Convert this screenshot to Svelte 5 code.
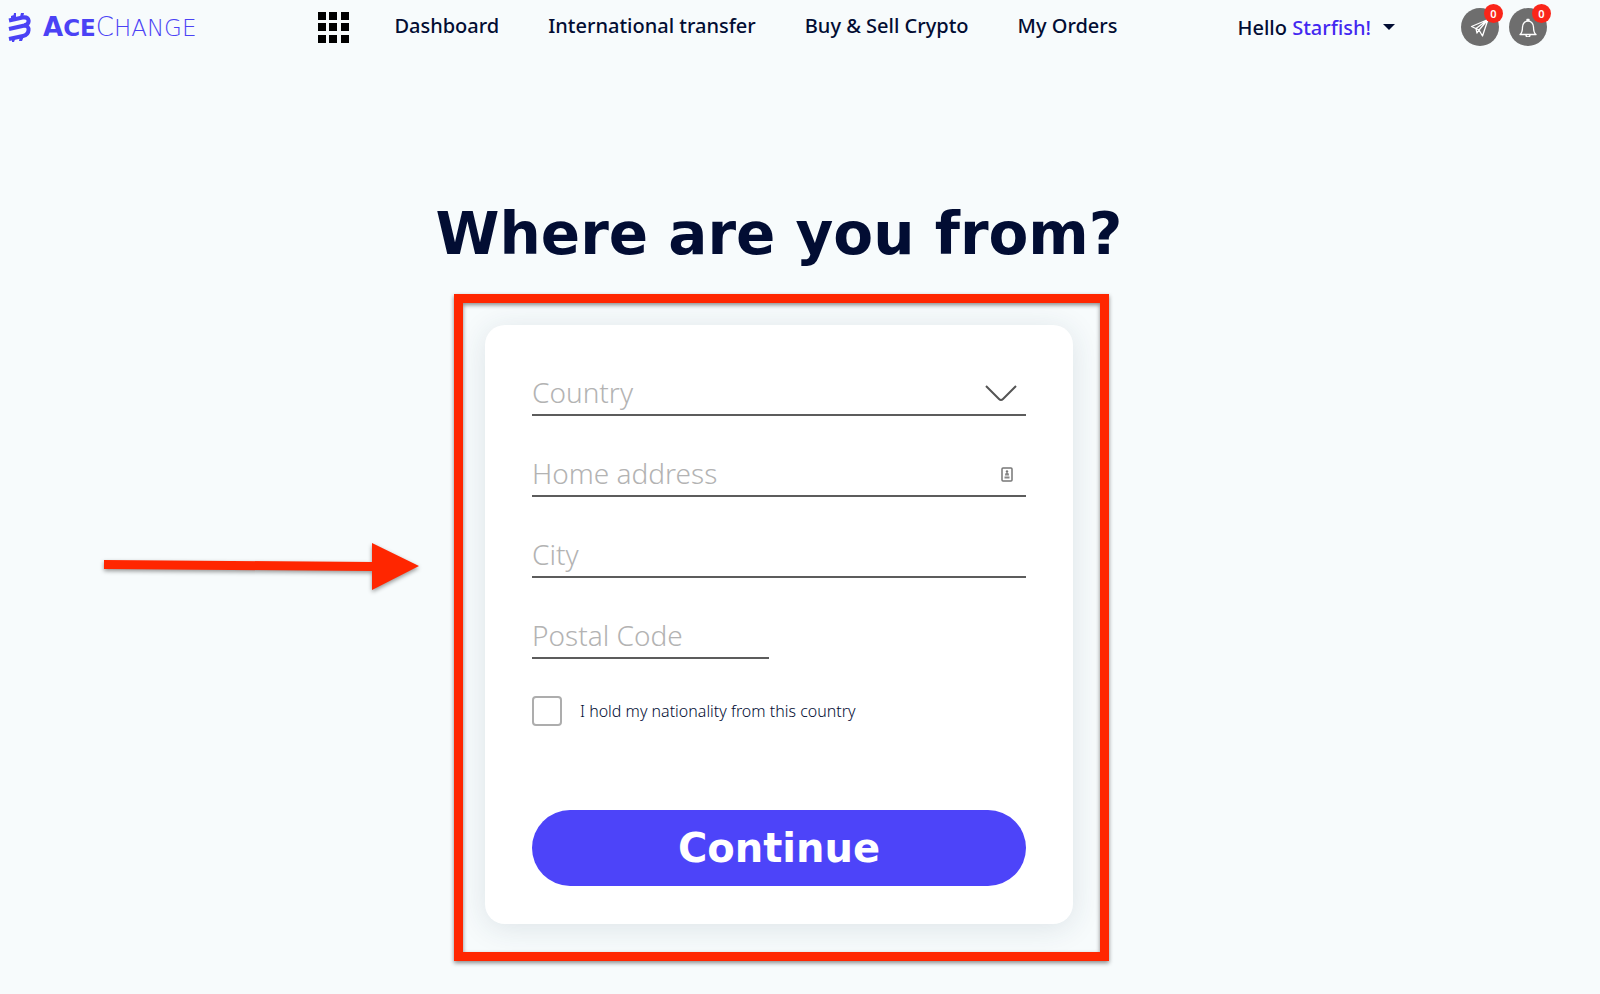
<script lang="ts">
  interface NavLink {
    label: string;
    href: string;
  }

  const links: NavLink[] = [
    { label: 'Dashboard', href: '#dashboard' },
    { label: 'International transfer', href: '#transfer' },
    { label: 'Buy & Sell Crypto', href: '#crypto' },
    { label: 'My Orders', href: '#orders' },
  ];

  // Top-left corners of the app launcher squares
  const dots = [0, 11, 23];

  let messages = $state(0);
  let alerts = $state(0);

  let country = $state('');
  let address = $state('');
  let city = $state('');
  let postalCode = $state('');
  let isNational = $state(false);

  function handleSubmit(event: SubmitEvent) {
    event.preventDefault();
  }
</script>

<header class="topbar">
  <a class="logo" href="#home">
    <svg width="23" height="32" viewBox="0 0 23 32" aria-hidden="true">
      <g fill="none" stroke="currentColor" stroke-width="4">
        <path d="M1 9.500L14.500 6.500C22 5.500 22.500 12.500 16.500 14.500L1 18" />
        <path d="M16 14.500C22.500 14 22 23.500 15 25L1 28" />
      </g>
      <path fill="currentColor" d="M3 8V5l3-1-1 4zM5 7l1-5h2v5zM12 6l1-4h3l-1 5zM4 26h4l-2 5H4zM12 25h4l-2 5h-3z" />
    </svg>
    <span class="logo-name"><b>A<small>CE</small></b><span class="thin">C<small>HANGE</small></span></span>
  </a>

  <button type="button" class="apps" aria-label="Apps">
    <svg width="31" height="31" viewBox="0 0 31 31">
      {#each dots as y}
        {#each dots as x}
          <rect {x} {y} width="8" height="8" />
        {/each}
      {/each}
    </svg>
  </button>

  <nav>
    {#each links as link (link.href)}
      <a href={link.href}>{link.label}</a>
    {/each}
  </nav>

  <div class="account">
    <button type="button" class="user">
      <span>Hello <span class="user-name">Starfish!</span></span>
      <svg width="12" height="6" viewBox="0 0 12 6" aria-hidden="true"><path d="M0 0h12L6 6z" fill="currentColor" /></svg>
    </button>

    <button type="button" class="round" aria-label="Messages">
      <svg width="20" height="20" viewBox="0 0 20 20" fill="none" stroke="currentColor" stroke-width="1.3" stroke-linejoin="round">
        <path d="M1.500 9.500L18 2.500L12.500 19L9 13zM18 2.500L6 11.500L7 16L9 13z" />
      </svg>
      <span class="badge">{messages}</span>
    </button>
    <button type="button" class="round" aria-label="Notifications">
      <svg width="20" height="20" viewBox="0 0 20 20" fill="none" stroke="currentColor" stroke-width="1.3" stroke-linejoin="round">
        <path d="M2 17.500C4 16 4.500 14 4.500 10C4.500 6.500 7 4 10 4s5.500 2.500 5.500 6c0 4 .5 6 2.500 7.500zM9 4V2.500h2V4M8 18a2 2 0 0 0 4 0" />
      </svg>
      <span class="badge">{alerts}</span>
    </button>
  </div>
</header>

<main>
  <h1>Where are you from?</h1>

  <form class="card" onsubmit={handleSubmit}>
    <div class="field">
      <select bind:value={country} aria-label="Country">
        <option value="">Country</option>
      </select>
      <svg class="chevron" width="32" height="17" viewBox="0 0 32 17" aria-hidden="true">
        <path d="M1 1l13 13Q16 16 18 14L31 1" fill="none" stroke="#555" stroke-width="2" />
      </svg>
    </div>

    <div class="field">
      <input type="text" placeholder="Home address" aria-label="Home address" bind:value={address} />
      <svg class="contact" width="12" height="15" viewBox="0 0 12 15" aria-hidden="true">
        <rect x="1" y="1" width="10" height="13" rx="1" fill="#fff" stroke="#777" stroke-width="1.500" />
        <circle cx="6" cy="4.500" r="1.200" fill="#777" />
        <path d="M4 8.500q0-3 2-3t2 3zM3.500 9.500h5v2h-5z" fill="#888" />
      </svg>
    </div>

    <div class="field">
      <input type="text" placeholder="City" aria-label="City" bind:value={city} />
    </div>

    <div class="field short">
      <input type="text" placeholder="Postal Code" aria-label="Postal Code" bind:value={postalCode} />
    </div>

    <label class="check">
      <input type="checkbox" bind:checked={isNational} />
      I hold my nationality from this country
    </label>

    <button type="submit" class="submit">Continue</button>

    <!-- Walkthrough highlight around the form -->
    <div class="highlight"></div>
    <svg class="arrow" width="320" height="54" viewBox="0 0 320 54" aria-hidden="true">
      <path d="M2 17L270 19V0L317 23L270 47V28L2 26z" fill="#ff2600" />
    </svg>
  </form>
</main>

<style>
  :global(body) {
    background: #f7fbfc;
    color: #020d33;
    font-family: 'Noto Sans', 'Open Sans', sans-serif;
  }

  button {
    padding: 0;
    border: none;
    background: none;
    color: inherit;
    font: inherit;
    cursor: pointer;
  }

  a {
    color: inherit;
    text-decoration: none;
  }

  .topbar {
    display: flex;
    align-items: center;
    height: 54px;
    padding: 0 53px 0 8px;
    font-size: 20px;
    font-weight: 500;
    white-space: nowrap;
  }

  .logo {
    display: flex;
    align-items: center;
    gap: 12px;
    color: #4b42f5;
  }

  .logo-name {
    font-family: 'DejaVu Sans', sans-serif;
    font-size: 26px;
    line-height: 32px;
  }

  .logo-name small {
    font-size: 23px;
  }

  .thin {
    font-weight: 200;
  }

  .apps {
    display: flex;
    margin-left: auto;
  }

  nav {
    display: flex;
    gap: 49px;
    margin-left: 45px;
    padding-bottom: 4px;
  }

  .account {
    display: flex;
    align-items: center;
    gap: 10px;
    margin-left: 120px;
  }

  .user {
    display: flex;
    align-items: center;
    gap: 12px;
    margin-right: 56px;
  }

  .user-name {
    color: #4328f0;
  }

  .round {
    position: relative;
    display: flex;
    align-items: center;
    justify-content: center;
    width: 38px;
    height: 38px;
    border-radius: 50%;
    background: #6e6e6e;
    color: #fff;
  }

  .badge {
    position: absolute;
    top: -4px;
    right: -4px;
    width: 19px;
    border-radius: 50%;
    background: #fa2519;
    font-size: 11px;
    font-weight: 600;
    line-height: 19px;
    text-align: center;
  }

  main {
    display: flex;
    flex-direction: column;
    align-items: center;
    padding: 142px 42px 70px 0;
  }

  h1 {
    margin: 0 0 53px;
    font-family: 'DejaVu Sans', sans-serif;
    font-size: 58px;
    font-weight: 700;
    line-height: 76px;
  }

  .card {
    position: relative;
    display: flex;
    flex-direction: column;
    gap: 37px;
    box-sizing: border-box;
    width: 100%;
    max-width: 588px;
    padding: 47px 47px 38px;
    border-radius: 20px;
    background: #fff;
    box-shadow: 0 4px 30px rgba(30, 60, 80, 0.12);
  }

  .field {
    position: relative;
    border-bottom: 2px solid #5c5c5c;
  }

  .field.short {
    width: 48%;
  }

  .field input,
  .field select {
    display: block;
    box-sizing: border-box;
    width: 100%;
    height: 42px;
    padding: 0 0 2px;
    border: none;
    outline: none;
    appearance: none;
    background: none;
    color: #b3b3b3;
    font: 300 28px 'Noto Sans', sans-serif;
  }

  .field input::placeholder {
    color: #b3b3b3;
  }

  .chevron {
    position: absolute;
    top: 13px;
    right: 9px;
    pointer-events: none;
  }

  .contact {
    position: absolute;
    top: 14px;
    right: 13px;
  }

  .check {
    display: flex;
    align-items: center;
    gap: 18px;
    font-size: 16px;
    font-weight: 300;
  }

  .check input {
    box-sizing: border-box;
    width: 30px;
    height: 30px;
    margin: 0;
    border: 2px solid #adadad;
    border-radius: 4px;
    appearance: none;
    background: #fff;
  }

  .check input:checked {
    background: #4d44f9;
  }

  .submit {
    height: 76px;
    margin-top: 47px;
    border-radius: 38px;
    background: #4d44f9;
    color: #fff;
    font-family: 'DejaVu Sans', sans-serif;
    font-size: 40px;
    font-weight: 700;
  }

  .highlight {
    position: absolute;
    inset: -31px -36px -37px -31px;
    border: 9px solid #ff2600;
    filter: drop-shadow(0 2px 2px rgba(0, 0, 0, 0.45));
    pointer-events: none;
  }

  .arrow {
    position: absolute;
    top: 218px;
    right: calc(100% + 63px);
    overflow: visible;
    filter: drop-shadow(0 2px 2px rgba(0, 0, 0, 0.4));
    pointer-events: none;
  }
</style>
